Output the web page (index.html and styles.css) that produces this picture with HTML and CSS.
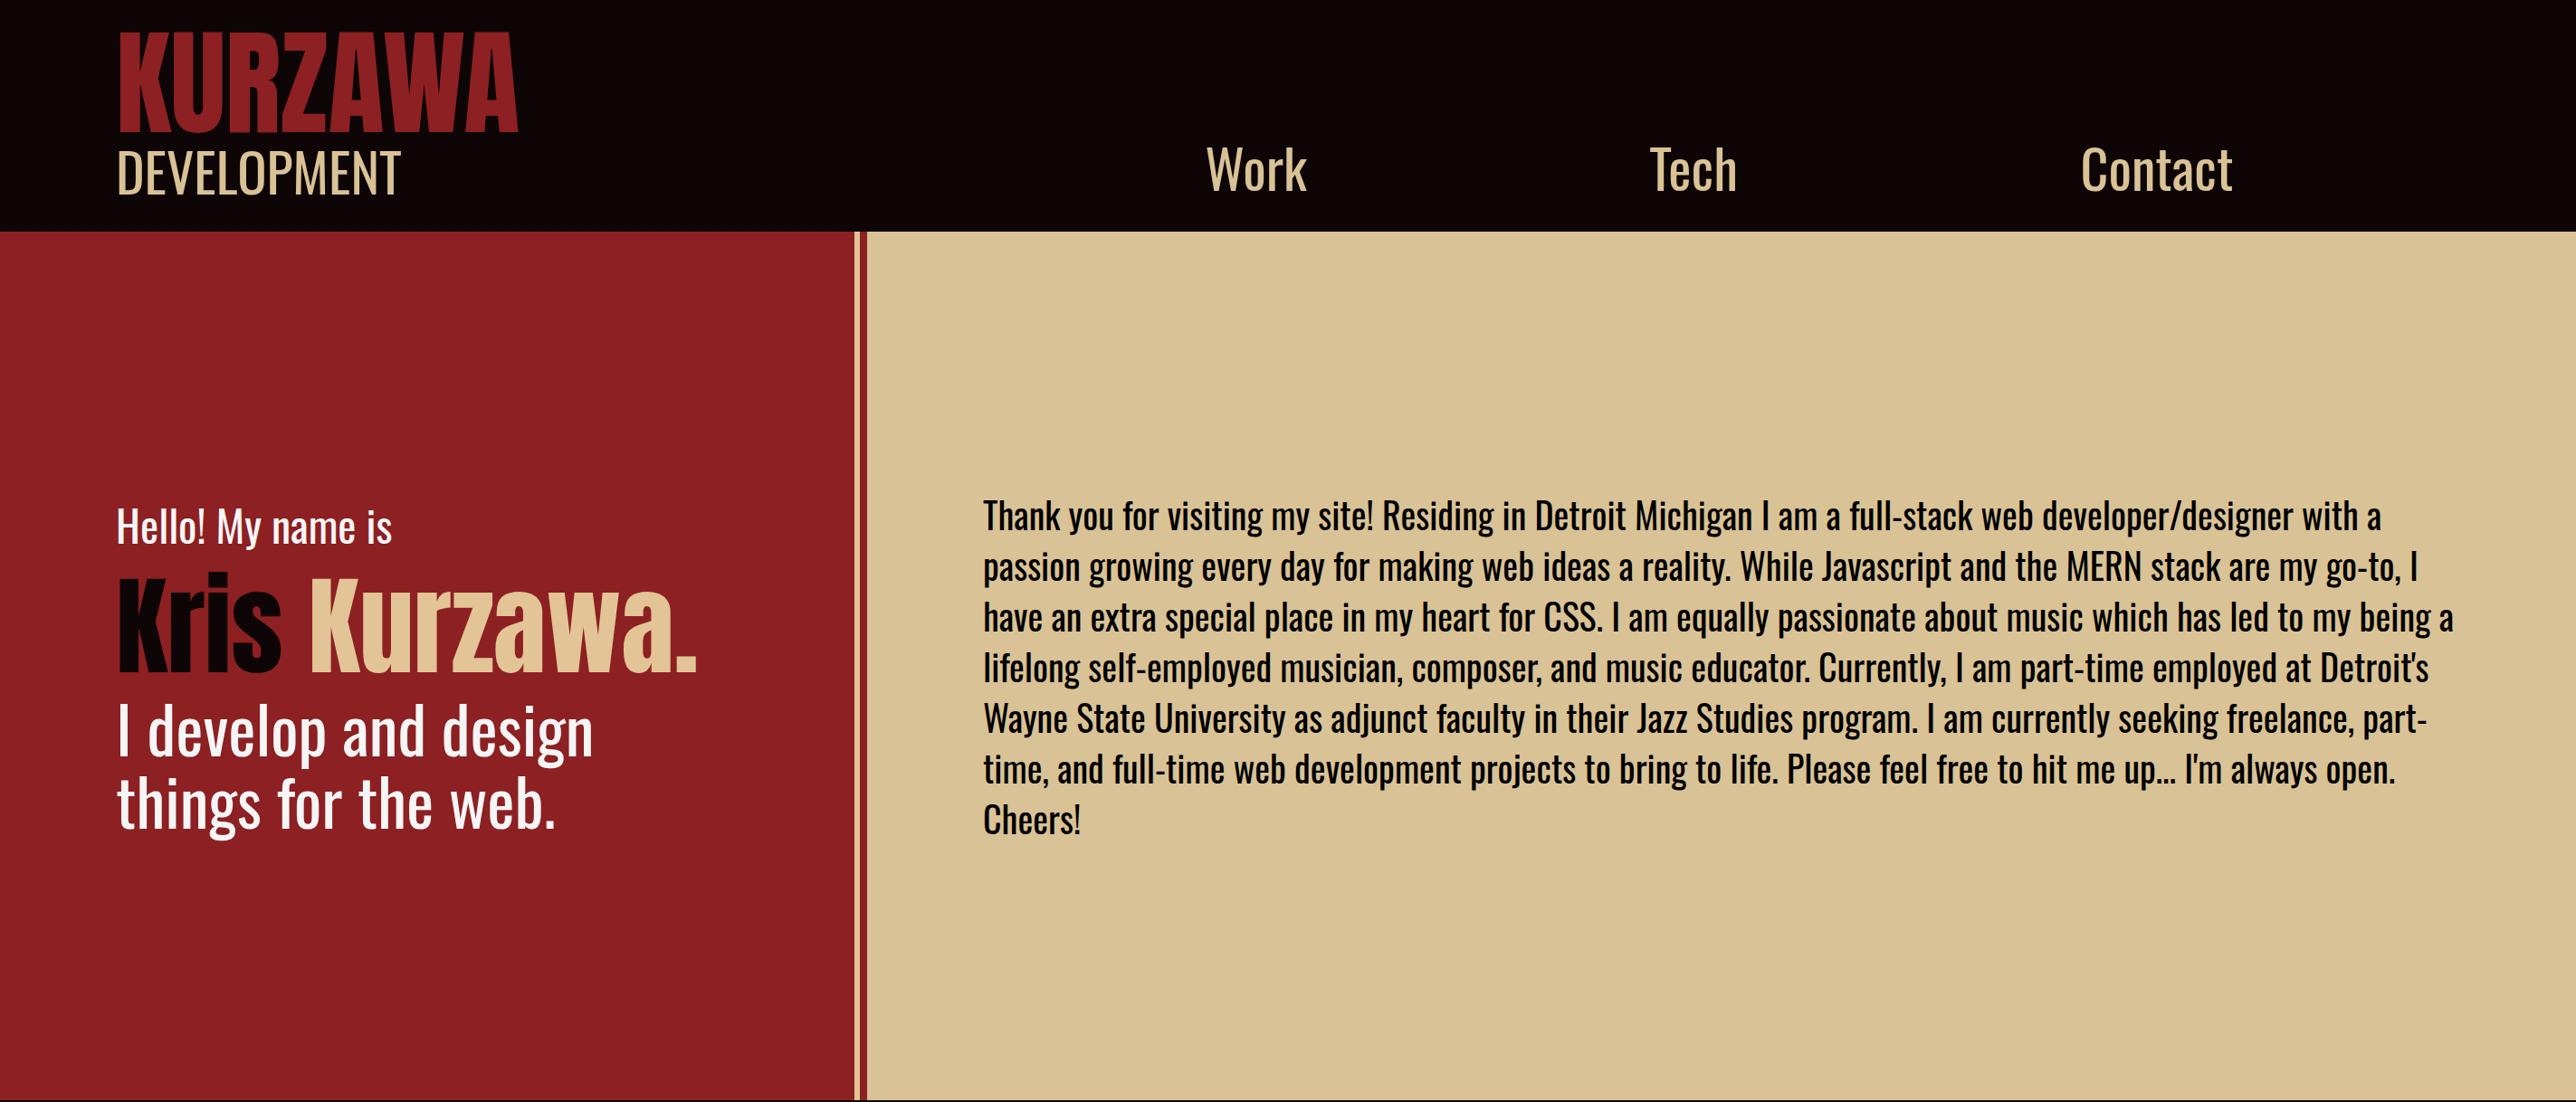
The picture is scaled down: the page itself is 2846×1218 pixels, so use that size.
FILE: index.html
```html
<!DOCTYPE html>
<html lang="en">
<head>
<meta charset="utf-8">
<meta name="viewport" content="width=device-width, initial-scale=1">
<title>Kurzawa Development</title>
<link rel="stylesheet" href="styles.css">
</head>
<body>
<header class="header">
  <a class="brand" href="#">
    <span class="brand-name">KURZAWA</span>
    <span class="brand-sub">DEVELOPMENT</span>
  </a>
  <nav class="nav">
    <a href="#work">Work</a>
    <a href="#tech">Tech</a>
    <a href="#contact">Contact</a>
  </nav>
</header>
<main class="main">
  <section class="intro">
    <p class="hello">Hello! My name is</p>
    <h1 class="name">Kris <span class="surname">Kurzawa.</span></h1>
    <h2 class="tagline">I develop and design things for the web.</h2>
  </section>
  <div class="divider"></div>
  <section class="about">
    <p class="bio">Thank you for visiting my site! Residing in Detroit Michigan I am a full-stack web developer/designer with a passion growing every day for making web ideas a reality. While Javascript and the MERN stack are my go-to, I have an extra special place in my heart for CSS. I am equally passionate about music which has led to my being a lifelong self-employed musician, composer, and music educator. Currently, I am part-time employed at Detroit's Wayne State University as adjunct faculty in their Jazz Studies program. I am currently seeking freelance, part-time, and full-time web development projects to bring to life. Please feel free to hit me up... I'm always open. Cheers!</p>
  </section>
</main>
</body>
</html>
```
FILE: styles.css
```css
* {
  box-sizing: border-box;
}

body {
  margin: 0;
  min-height: 100vh;
  display: flex;
  flex-direction: column;
  background: #0e0506;
  font-family: Oswald, "Roboto Condensed", sans-serif;
}

p, h1, h2 {
  margin: 0;
}

a {
  text-decoration: none;
}

.header {
  display: grid;
  grid-template-columns: 1fr 2fr;
  min-height: 256px;
  color: #d9c295;
}

.brand {
  display: flex;
  flex-direction: column;
  padding: 32px 0 32px 128px;
  color: inherit;
}

.brand-name {
  font-family: Impact, Anton, sans-serif;
  font-size: 128px;
  line-height: 120px;
  color: #8c2022;
}

.brand-sub {
  font-size: 60px;
  line-height: 72px;
}

.nav {
  display: flex;
  justify-content: space-evenly;
  align-items: flex-end;
  padding: 0 0 36px 4px;
}

.nav a {
  color: inherit;
  font-size: 60px;
  line-height: 72px;
}

.main {
  flex: 1;
  display: grid;
  grid-template-columns: 1fr 14px 2fr;
  margin-bottom: 2px;
}

.intro {
  display: flex;
  flex-direction: column;
  justify-content: center;
  padding: 0 128px;
  background: #8c2022;
  color: #f5f5f5;
}

.hello {
  margin-bottom: 8px;
  font-size: 48px;
  line-height: 64px;
}

.name {
  font-family: Impact, Anton, sans-serif;
  font-size: 120px;
  line-height: 144px;
  font-weight: 400;
  white-space: nowrap;
  color: #0e0506;
}

.surname {
  color: #e3c496;
}

.tagline {
  font-size: 72px;
  line-height: 80px;
  font-weight: 400;
}

.divider {
  background: #8c2022;
  border-left: 6px solid #e3c496;
}

.about {
  display: flex;
  align-items: center;
  padding: 0 128px;
  background: #d9c295;
}

.bio {
  font-size: 40px;
  line-height: 56px;
  color: #000;
}
```
